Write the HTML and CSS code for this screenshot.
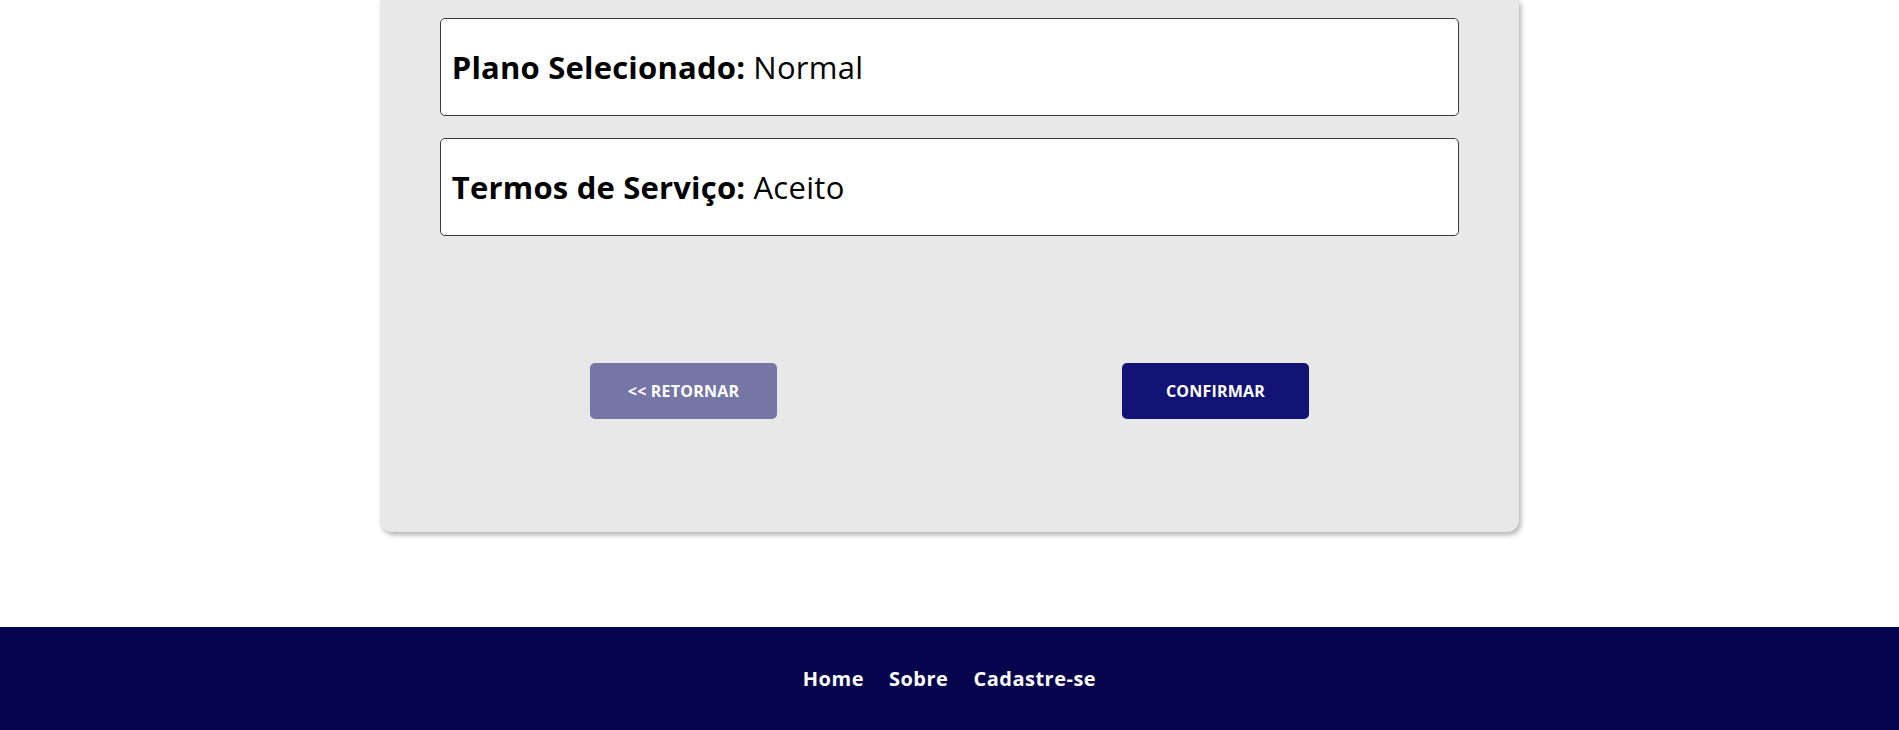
FILE: index.html
```html
<!DOCTYPE html>
<html lang="pt-BR">
<head>
<meta charset="utf-8">
<title>Confirmação</title>
<link rel="stylesheet" href="styles.css">
</head>
<body>
<main class="page">
  <section class="panel">
    <div class="field"><strong>Plano Selecionado:</strong>&nbsp;<span>Normal</span></div>
    <div class="field"><strong>Termos de Serviço:</strong>&nbsp;<span>Aceito</span></div>
    <div class="actions">
      <button class="btn btn-back" type="button">&lt;&lt; RETORNAR</button>
      <button class="btn btn-confirm" type="button">CONFIRMAR</button>
    </div>
  </section>
</main>
<footer class="footer">
  <a class="footer-link" href="#">Home</a>
  <a class="footer-link" href="#">Sobre</a>
  <a class="footer-link" href="#">Cadastre-se</a>
</footer>
</body>
</html>
```
FILE: styles.css
```css
html, body {
  margin: 0;
  padding: 0;
  background: #ffffff;
  font-family: "Open Sans", "DejaVu Sans", sans-serif;
}

.page {
  display: block;
}

.panel {
  width: 60%;
  margin: 0 auto;
  box-sizing: border-box;
  background: #e8e8e8;
  border-radius: 0 0 12px 12px;
  box-shadow: 2px 3px 5px rgba(0, 0, 0, 0.3);
  padding: 18px 60px 113px;
}

.field {
  box-sizing: border-box;
  height: 98px;
  background: #ffffff;
  border: 1px solid #3a3a3a;
  border-radius: 5px;
  display: flex;
  align-items: center;
  padding: 0 11px;
  font-size: 31px;
  color: #000;
  white-space: nowrap;
}

.field + .field {
  margin-top: 22px;
}

.field strong {
  font-weight: 700;
  letter-spacing: 0.2px;
}

.field span {
  font-weight: 400;
  letter-spacing: 0.3px;
}

.actions {
  margin-top: 127px;
  display: flex;
  justify-content: center;
  gap: 345px;
}

.btn {
  width: 187px;
  height: 56px;
  border: none;
  border-radius: 5px;
  color: #ffffff;
  font-family: "Open Sans", "DejaVu Sans", sans-serif;
  font-weight: 700;
  font-size: 16px;
  letter-spacing: 0.2px;
  padding: 0;
  cursor: pointer;
}

.btn-back {
  background: #7575a6;
}

.btn-confirm {
  background: #131275;
}

.footer {
  margin-top: 95px;
  height: 103px;
  background: #05044d;
  display: flex;
  justify-content: center;
  align-items: center;
  gap: 25px;
}

.footer-link {
  color: #ffffff;
  text-decoration: none;
  font-weight: 700;
  font-size: 20px;
  letter-spacing: 0.5px;
}
```
